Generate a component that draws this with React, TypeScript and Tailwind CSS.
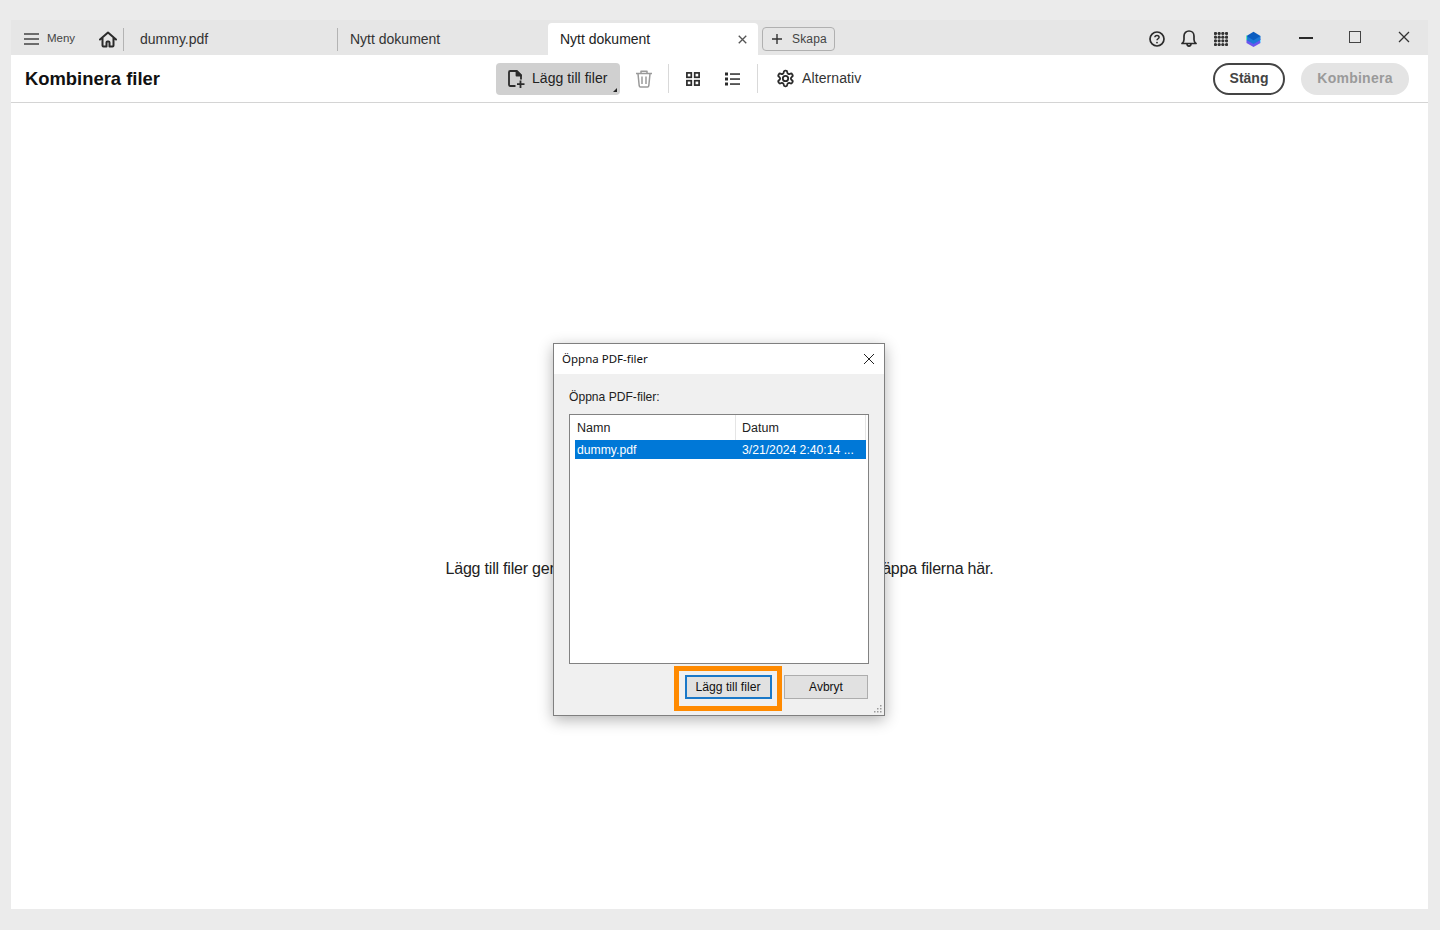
import React from "react";

const F = "font-['Liberation_Sans',Arial,sans-serif]";

function Hamburger() {
  return (
    <svg width="15" height="14" viewBox="0 0 15 14" fill="none" stroke="#444" strokeWidth="1.7">
      <path d="M0 2h15M0 7h15M0 12h15" />
    </svg>
  );
}
function Home() {
  return (
    <svg width="18" height="17" viewBox="0 0 18 17" fill="none" stroke="#2b2b2b" strokeWidth="2" strokeLinejoin="round" strokeLinecap="round">
      <path d="M1 8.500 9 1.500l8 7M3.500 7v7.500c0 .7.400 1 1 1h3v-4c0-.6.300-1 1-1h1c.7 0 1 .4 1 1v4h3c.6 0 1-.3 1-1V7" />
    </svg>
  );
}
function AddFile() {
  return (
    <svg width="17" height="18" viewBox="0 0 17 18" fill="none" stroke="#2b2b2b" strokeWidth="1.800" strokeLinejoin="round">
      <path d="M7.500 16H2.300C1.500 16 1 15.500 1 14.700V2.300C1 1.500 1.500 1 2.300 1h6.500L13 5.200v4.300" />
      <path d="M8.500 1.200v4.300H13z" fill="#2b2b2b" />
      <path d="M12.500 10.500V18M9 14.200h7.500" />
    </svg>
  );
}
function Trash() {
  return (
    <svg width="18" height="18" viewBox="0 0 18 18" fill="none" stroke="#9a9a9a" strokeWidth="1.500" strokeLinejoin="round">
      <path d="M1 3.500h16M6 3.300V1.200h6v2.100M3 3.700l1.200 12c.1.800.5 1.200 1.200 1.200h7.200c.7 0 1.100-.4 1.200-1.200l1.200-12M7 6.500v7.500M11 6.500v7.500" />
    </svg>
  );
}
function Grid() {
  return (
    <svg width="14" height="14" viewBox="0 0 14 14" fill="none" stroke="#2b2b2b" strokeWidth="1.700">
      <rect x="0.900" y="0.900" width="4.400" height="4.400" />
      <rect x="8.700" y="0.900" width="4.400" height="4.400" />
      <rect x="0.900" y="8.700" width="4.400" height="4.400" />
      <rect x="8.700" y="8.700" width="4.400" height="4.400" />
    </svg>
  );
}
function ListIcon() {
  return (
    <svg width="15" height="14" viewBox="0 0 15 14" fill="#2b2b2b">
      <rect x="0" y="0.500" width="3" height="3" />
      <rect x="0" y="5.500" width="3" height="3" />
      <rect x="0" y="10.500" width="3" height="3" />
      <rect x="5" y="1.300" width="10" height="1.500" />
      <rect x="5" y="6.300" width="10" height="1.500" />
      <rect x="5" y="11.300" width="10" height="1.500" />
    </svg>
  );
}
function Gear() {
  return (
    <svg width="19" height="19" viewBox="0 0 24 24" fill="none" stroke="#2b2b2b" strokeWidth="2.300" strokeLinejoin="round">
      <path d="M12.220 2h-.44a2 2 0 0 0-2 2v.18a2 2 0 0 1-1 1.730l-.43.25a2 2 0 0 1-2 0l-.15-.08a2 2 0 0 0-2.730.73l-.22.38a2 2 0 0 0 .73 2.730l.15.1a2 2 0 0 1 1 1.720v.51a2 2 0 0 1-1 1.740l-.15.09a2 2 0 0 0-.73 2.730l.22.38a2 2 0 0 0 2.730.73l.15-.08a2 2 0 0 1 2 0l.43.25a2 2 0 0 1 1 1.730V20a2 2 0 0 0 2 2h.44a2 2 0 0 0 2-2v-.18a2 2 0 0 1 1-1.730l.43-.25a2 2 0 0 1 2 0l.15.08a2 2 0 0 0 2.730-.73l.22-.39a2 2 0 0 0-.73-2.730l-.15-.08a2 2 0 0 1-1-1.740v-.5a2 2 0 0 1 1-1.740l.15-.09a2 2 0 0 0 .73-2.730l-.22-.38a2 2 0 0 0-2.730-.73l-.15.08a2 2 0 0 1-2 0l-.43-.25a2 2 0 0 1-1-1.730V4a2 2 0 0 0-2-2z" />
      <circle cx="12" cy="12" r="3.400" />
    </svg>
  );
}
function Help() {
  return (
    <svg width="16" height="16" viewBox="0 0 16 16" fill="none" stroke="#2b2b2b">
      <circle cx="8" cy="8" r="7" strokeWidth="1.700" />
      <path d="M5.900 6.300C5.900 5.100 6.900 4.400 8 4.400s2.100.7 2.100 1.800c0 1.500-2.100 1.600-2.100 3.100" strokeWidth="1.500" />
      <circle cx="8" cy="11.600" r="0.900" fill="#2b2b2b" stroke="none" />
    </svg>
  );
}
function Bell() {
  return (
    <svg width="16" height="18" viewBox="0 0 16 18" fill="none" stroke="#2b2b2b" strokeWidth="1.700" strokeLinejoin="round">
      <path d="M1 13.500c1.500-1 2-2.200 2-4V6C3 3.200 5.200 1 8 1s5 2.200 5 5v3.500c0 1.800.5 3 2 4z" />
      <path d="M6 13.800c0 3 4 3 4 0" />
    </svg>
  );
}
function Dots() {
  const pts = [0, 1, 2, 3];
  return (
    <svg width="14" height="14" viewBox="0 0 14 14" fill="#333">
      {pts.map((r) => pts.map((c) => <circle key={`${r}${c}`} cx={1.500 + c * 3.670} cy={1.500 + r * 3.670} r="1.600" />))}
    </svg>
  );
}
function Cube() {
  return (
    <svg width="15" height="16" viewBox="0 0 15 16">
      <path d="M7.500 5 14.500 8.500v3.500L7.500 16 .5 12V8.500z" fill="#6a54ee" />
      <path d="M.5 5v4L7.500 13 14.500 9V5z" fill="#1a78d8" />
      <path d="M7.500 .8 14.500 5 7.500 9.200 .5 5z" fill="#0a5cc0" />
      <path d="M.6 4.500v4.500" stroke="#5fe8b8" strokeWidth="1" />
      <path d="M14.500 9v2.500" stroke="#8ad8ff" strokeWidth="1" />
    </svg>
  );
}
function X({ size, color, w }: { size: number; color: string; w: number }) {
  return (
    <svg width={size} height={size} viewBox="0 0 12 12" fill="none" stroke={color} strokeWidth={w}>
      <path d="M1 1l10 10M11 1 1 11" />
    </svg>
  );
}
function Divider() {
  return <div className="h-[29px] w-px bg-[#d9d9d9]" />;
}
function Grip() {
  return (
    <svg width="9" height="9" viewBox="0 0 9 9" fill="#9a9a9a" className="absolute bottom-[2px] right-[2px]">
      <rect x="7" y="1" width="1.500" height="1.500" />
      <rect x="4" y="4" width="1.500" height="1.500" />
      <rect x="7" y="4" width="1.500" height="1.500" />
      <rect x="1" y="7" width="1.500" height="1.500" />
      <rect x="4" y="7" width="1.500" height="1.500" />
      <rect x="7" y="7" width="1.500" height="1.500" />
    </svg>
  );
}

export default function App() {
  return (
    <div className={`${F} flex h-[930px] w-[1440px] flex-col overflow-hidden bg-[#ebebeb] pb-[21px] pl-[11px] pr-[12px] pt-[20px]`}>
      {/* tab bar */}
      <div className="flex h-[35px] shrink-0 items-center bg-[#e6e6e6] pt-[3px]">
        <div className="flex h-full w-[75px] items-center pl-[13px]">
          <Hamburger />
          <span className="ml-[8px] text-[11.500px] text-[#444]">Meny</span>
        </div>
        <div className="ml-[13px] flex w-[24px] items-center">
          <Home />
        </div>
        <div className="flex h-full w-[214px] items-center">
          <div className="h-[23px] w-px bg-[#b3b3b3]" />
          <span className="pl-[16px] text-[14px] text-[#333]">dummy.pdf</span>
        </div>
        <div className="flex h-full w-[211px] items-center">
          <div className="h-[23px] w-px bg-[#b3b3b3]" />
          <span className="pl-[12px] text-[14px] text-[#333]">Nytt dokument</span>
        </div>
        <div className="flex h-[32px] w-[210px] items-center justify-between self-start rounded-t-[4px] bg-white pl-[12px] pr-[11px]">
          <span className="text-[14px] text-[#222]">Nytt dokument</span>
          <X size={9} color="#555" w={1.800} />
        </div>
        <div className="ml-[4px] flex h-[24px] w-[73px] items-center gap-[10px] rounded-[4px] border border-[#b0b0b0] pl-[9px] text-[12px] tracking-[0.150px] text-[#444]">
          <svg width="10" height="10" viewBox="0 0 10 10" stroke="#333" strokeWidth="1.400"><path d="M5 0v10M0 5h10" /></svg>
          Skapa
        </div>
        <div className="ml-auto flex h-full items-center">
          <Help />
          <div className="ml-[16px]"><Bell /></div>
          <div className="ml-[17px]"><Dots /></div>
          <div className="ml-[18px]"><Cube /></div>
          <div className="ml-[38px] mb-[2px] h-[2px] w-[14px] bg-[#2b2b2b]" />
          <div className="ml-[36px] mb-[4px] h-[12px] w-[12px] border-[1.500px] border-[#444]" />
          <div className="ml-[37px] mr-[18px] mb-[4px]"><X size={12} color="#333" w={1.300} /></div>
        </div>
      </div>
      {/* toolbar */}
      <div className="flex h-[48px] shrink-0 items-center border-b border-[#d4d4d4] bg-white pl-[14px] pr-[19px]">
        <h1 className="w-[471px] pt-[1px] text-[18.400px] font-bold text-[#111]">Kombinera filer</h1>
        <div className="relative flex h-[32px] w-[124px] items-center gap-[7px] rounded-[4px] bg-[#d0d0d0] pl-[12px] text-[14px] tracking-[0.050px] text-[#222]">
          <AddFile />
          Lägg till filer
          <div className="absolute bottom-[3px] right-[3px] h-0 w-0 border-b-[4px] border-l-[4px] border-b-[#222] border-l-transparent" />
        </div>
        <div className="ml-[15px] mr-[15px]"><Trash /></div>
        <Divider />
        <div className="ml-[17px] mr-[25px]"><Grid /></div>
        <ListIcon />
        <div className="ml-[17px]"><Divider /></div>
        <div className="ml-[18px] mr-[7px]"><Gear /></div>
        <span className="text-[14px] tracking-[0.100px] text-[#333]">Alternativ</span>
        <div className="ml-auto flex items-center gap-[16px]">
          <div className="flex h-[32px] w-[72px] items-center justify-center rounded-full border-2 border-[#444] text-[14px] font-bold text-[#444]">Stäng</div>
          <div className="flex h-[32px] w-[108px] items-center justify-center rounded-full bg-[#e4e4e4] text-[14px] font-bold tracking-[0.250px] text-[#9a9a9a]">Kombinera</div>
        </div>
      </div>
      {/* content */}
      <div className="relative flex flex-1 justify-center bg-white pt-[454px]">
        <p className="text-[16px] leading-[24px] tracking-[-0.200px] text-[#222]">
          Lägg till filer genom att klicka på knappen ovan, eller dra, och släppa filerna här.
        </p>
        {/* dialog */}
        <div className="absolute left-[542px] top-[240px] flex h-[373px] w-[332px] flex-col border border-[#7f7f7f] bg-[#f0f0f0] shadow-[0_4px_14px_rgba(0,0,0,0.3)]">
          <div className="flex h-[30px] shrink-0 items-center justify-between bg-white pl-[8px] pr-[9px] font-['Noto_Sans',sans-serif] text-[11.500px] text-[#111]">
            Öppna PDF-filer
            <X size={12} color="#222" w={1} />
          </div>
          <div className="px-[15px] pt-[15px] text-[12.100px] leading-[16px] text-[#222]">Öppna PDF-filer:</div>
          <div className="mx-[15px] mt-[9px] h-[250px] border border-[#828282] bg-white pl-[5px] pr-[2px] text-[12.200px]">
            <div className="flex h-[25px] items-center text-[12.500px] text-[#222]">
              <div className="flex h-full w-[161px] items-center border-r border-[#e5e5e5] pl-[2px] pt-[1px]">Namn</div>
              <div className="flex h-full flex-1 items-center border-r border-[#e5e5e5] pl-[6px] pt-[1px]">Datum</div>
            </div>
            <div className="flex h-[19px] items-center bg-[#0078d7] pt-[1px] text-white">
              <div className="w-[162px] pl-[2px]">dummy.pdf</div>
              <div className="pl-[5px]">3/21/2024 2:40:14 ...</div>
            </div>
          </div>
          <div className="flex justify-end pr-[16px] pt-[11px]">
            <div className="relative flex h-[24px] w-[87px] items-center justify-center border-2 border-[#1a78c8] bg-[#e1e1e1] pr-[1px] text-[12.200px] text-[#111]">
              Lägg till filer
              <div className="absolute -bottom-[14px] -left-[13px] -right-[12px] -top-[11px] border-[5px] border-[#ff8a00]" />
            </div>
            <div className="ml-[12px] flex h-[24px] w-[84px] items-center justify-center border border-[#adadad] bg-[#e1e1e1] text-[12px] text-[#111]">Avbryt</div>
          </div>
          <Grip />
        </div>
      </div>
    </div>
  );
}
